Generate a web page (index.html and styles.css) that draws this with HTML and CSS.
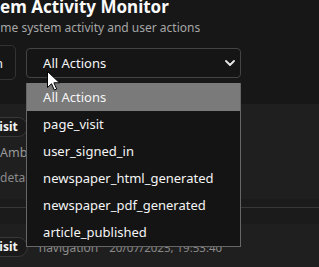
FILE: index.html
```html
<!DOCTYPE html>
<html lang="en">
<head>
<meta charset="utf-8">
<title>System Activity Monitor</title>
<link rel="stylesheet" href="styles.css">
</head>
<body>
<div class="page">
  <header class="header">
    <h1 class="title">System Activity Monitor</h1>
    <p class="subtitle">Real-time system activity and user actions</p>
  </header>

  <div class="filters">
    <button class="btn">Back to Admin</button>
    <div class="select-wrap">
      <div class="select">
        <span>All Actions</span>
        <svg class="chev" width="10" height="6" viewBox="0 0 10 6"><path d="M1 1l4 4 4-4" fill="none" stroke="#e8e8e8" stroke-width="1.8" stroke-linecap="round" stroke-linejoin="round"/></svg>
      </div>
      <ul class="menu">
        <li class="opt active">All Actions</li>
        <li class="opt">page_visit</li>
        <li class="opt">user_signed_in</li>
        <li class="opt">newspaper_html_generated</li>
        <li class="opt">newspaper_pdf_generated</li>
        <li class="opt">article_published</li>
      </ul>
      <svg class="cursor" width="13" height="20" viewBox="0 0 13 20"><path d="M0.5 0.5v16l4-3.8 2.8 6.3 2.4-1-2.8-6.2h5.6z" fill="#fff" stroke="#000" stroke-width="1"/></svg>
    </div>
  </div>

  <div class="list">
    <div class="entry first">
      <div class="entry-body">
        <div class="meta">
          <span class="badge">page_visit</span>
          <span class="cat">navigation</span>
          <span class="time">20/07/2025, 19:54:12</span>
        </div>
        <div class="sub user">Amber Thompson</div>
        <div class="sub detail">details: /admin/activity</div>
      </div>
      <div class="foot"></div>
    </div>
    <div class="entry">
      <div class="head"></div>
      <div class="entry-body">
        <div class="meta">
          <span class="badge">page_visit</span>
          <span class="cat">navigation</span>
          <span class="time">20/07/2025, 19:53:40</span>
        </div>
      </div>
    </div>
  </div>
</div>
</body>
</html>
```

FILE: styles.css
```css
* { box-sizing: border-box; }
html, body { margin: 0; padding: 0; }
body {
  background: #171717;
  color: #f2f2f2;
  font-family: "Noto Sans", "Open Sans", sans-serif;
  overflow: hidden;
}
.page {
  margin-left: -98px;
  width: 480px;
}
.header { margin-left: 63px; }
.title {
  margin: -3px 0 0 0;
  font-size: 17px;
  line-height: 20px;
  font-weight: 700;
  color: #fafafa;
}
.subtitle {
  margin: 3px 0 0 0;
  font-size: 12px;
  line-height: 16px;
  color: #a6a6a6;
}
.filters {
  display: flex;
  align-items: center;
  gap: 10px;
  margin-top: 9px;
}
.btn {
  height: 35px;
  padding: 0 12px;
  background: #161616;
  color: #f2f2f2;
  border: 1px solid #333;
  border-radius: 5px;
  font-family: inherit;
  font-size: 13px;
}
.select-wrap {
  position: relative;
  width: 215px;
}
.select {
  height: 30px;
  display: flex;
  align-items: center;
  justify-content: space-between;
  padding: 0 5px 0 16px;
  background: #151515;
  border: 1px solid #444;
  border-radius: 4px;
  font-size: 13px;
  color: #f5f5f5;
}
.chev { margin-top: 1px; }
.menu {
  position: absolute;
  left: 0;
  top: 35px;
  width: 215px;
  margin: 0;
  padding: 0;
  list-style: none;
  background: #141414;
  border: 1px solid #666;
  border-top: 0;
  z-index: 5;
}
.opt {
  height: 27px;
  line-height: 27px;
  padding-left: 16px;
  font-size: 13px;
  color: #f5f5f5;
}
.opt.active {
  background: #7a7a7a;
  height: 28px;
  line-height: 28px;
}
.cursor {
  position: absolute;
  left: 21px;
  top: 23px;
  z-index: 6;
}
.list {
  margin-top: 24px;
  background: #1f1f1f;
}
.entry { border-bottom: 1px solid #373737; }
.entry-body { padding: 13px 0 0 46px; }
.entry.first .entry-body { height: 95px; }
.foot { height: 8px; background: #1b1b1b; }
.head { height: 16px; background: #1b1b1b; }
.entry + .entry .entry-body { height: 60px; }
.meta {
  display: flex;
  align-items: center;
  gap: 11px;
}
.badge {
  height: 20px;
  line-height: 18px;
  padding: 0 9px;
  border: 1px solid #383838;
  border-radius: 10px;
  background: #1a1a1a;
  font-size: 12px;
  font-weight: 700;
  color: #f5f5f5;
}
.cat {
  font-size: 12px;
  color: #8a8a8a;
}
.time {
  font-size: 11.5px;
  color: #8a8a8a;
}
.sub { padding-left: 52px; }
.user {
  margin-top: 6px;
  font-size: 12.5px;
  line-height: 20px;
  color: #9a9a9a;
}
.detail {
  margin-top: 6px;
  font-size: 12px;
  line-height: 18px;
  color: #8a8a8a;
}
```
